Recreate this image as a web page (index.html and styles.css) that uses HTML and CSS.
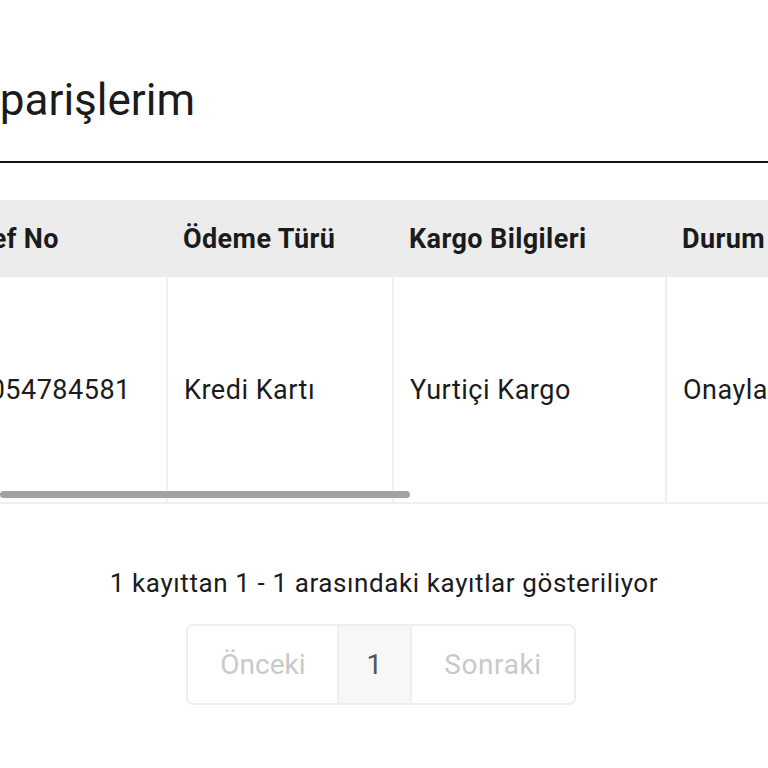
FILE: index.html
```html
<!DOCTYPE html>
<html lang="tr">
<head>
    <meta charset="UTF-8">
    <meta name="viewport" content="width=device-width, initial-scale=1.0">
    <title>Siparişlerim</title>
    <link rel="stylesheet" href="styles.css">
</head>
<body>

    <div class="page">
        <h1 class="page-title">Siparişlerim</h1>
        <hr class="divider">

        <div class="table-scroll">
            <table class="orders">
                <colgroup>
                    <col class="c-ref">
                    <col class="c-pay">
                    <col class="c-cargo">
                    <col class="c-status">
                    <col class="c-total">
                </colgroup>
                <thead>
                    <tr>
                        <th>Ref No</th>
                        <th>Ödeme Türü</th>
                        <th>Kargo Bilgileri</th>
                        <th>Durum</th>
                        <th>Tutar</th>
                    </tr>
                </thead>
                <tbody>
                    <tr>
                        <td>2054784581</td>
                        <td>Kredi Kartı</td>
                        <td>Yurtiçi Kargo</td>
                        <td>Onaylandı</td>
                        <td>149,90 TL</td>
                    </tr>
                </tbody>
            </table>
            <div class="scroll-thumb"></div>
        </div>

        <p class="table-info">1 kayıttan 1 - 1 arasındaki kayıtlar gösteriliyor</p>

        <nav class="pager">
            <a class="pager-btn prev disabled">Önceki</a>
            <a class="pager-btn current">1</a>
            <a class="pager-btn next disabled">Sonraki</a>
        </nav>
    </div>

</body>
</html>
```

FILE: styles.css
```css
/* Basic page setup */
:root {
    --ink: #1b1b1b;
    --head-bg: #ececec;
    --line: #efefef;
    --muted: #c9c9c9;
}

body {
    margin: 0;
    font-family: Roboto, "Noto Sans", sans-serif;
    color: var(--ink);
    background: #fff;
    overflow: hidden;
}

.page {
    padding-top: 74px;
}

.page-title {
    font-size: 44px;
    font-weight: 400;
    line-height: 52px;
    margin: 0 0 0 -37px;
    white-space: nowrap;
}

.divider {
    border: none;
    border-top: 2px solid #111;
    margin: 35px 0 37px;
}

/* Orders table, scrolled to the side */
.table-scroll {
    position: relative;
    overflow: hidden;
}

.orders {
    border-collapse: collapse;
    table-layout: fixed;
    width: 1110px;
    margin-left: -42px;
    font-size: 27px;
}

.c-ref { width: 209px; }
.c-pay { width: 226px; }
.c-cargo { width: 273px; }
.c-status { width: 200px; }
.c-total { width: 202px; }

.orders th {
    background: var(--head-bg);
    height: 77px;
    padding: 0 16px;
    text-align: left;
    font-weight: 700;
    letter-spacing: 0.4px;
    white-space: nowrap;
}

.orders td {
    height: 225px;
    padding: 0 16px;
    border-left: 2px solid var(--line);
    border-bottom: 2px solid var(--line);
    letter-spacing: 0.5px;
    white-space: nowrap;
}

.orders td:first-child {
    border-left: none;
}

.scroll-thumb {
    position: absolute;
    left: 0;
    bottom: 6px;
    width: 410px;
    height: 7px;
    border-radius: 4px;
    background: #a2a2a2;
}

.table-info {
    text-align: center;
    font-size: 26px;
    letter-spacing: 0.6px;
    margin: 64px 0 26px;
}

/* Pagination */
.pager {
    display: flex;
    width: fit-content;
    margin: 0 auto;
    border: 2px solid #eeeeee;
    border-radius: 7px;
    overflow: hidden;
    transform: translateX(-3px);
}

.pager-btn {
    font-size: 28px;
    line-height: 77px;
    color: var(--muted);
}

.pager-btn.prev { padding: 0 31px 0 32px; }
.pager-btn.next { padding: 0 32px; letter-spacing: 0.6px; }

.pager-btn.current {
    color: #555;
    background: #f7f7f7;
    border-left: 2px solid #eeeeee;
    border-right: 2px solid #eeeeee;
    padding: 0 28px;
}
```
